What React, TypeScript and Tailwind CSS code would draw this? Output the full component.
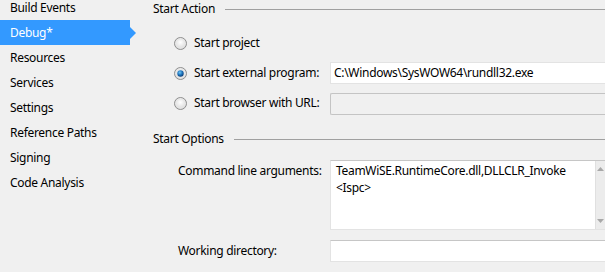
const navItems = [
  "Build Events",
  "Debug*",
  "Resources",
  "Services",
  "Settings",
  "Reference Paths",
  "Signing",
  "Code Analysis",
]

function Radio({ checked }: { checked?: boolean }) {
  return (
    <svg width="13" height="13" viewBox="0 0 13 13" className="shrink-0">
      <defs>
        <radialGradient id="rg" cx="50%" cy="40%" r="60%">
          <stop offset="0%" stopColor="#ffffff" />
          <stop offset="100%" stopColor="#d6d6d6" />
        </radialGradient>
        <radialGradient id="dot" cx="40%" cy="35%" r="65%">
          <stop offset="0%" stopColor="#6fc6f5" />
          <stop offset="60%" stopColor="#1a6fb8" />
          <stop offset="100%" stopColor="#0d3f78" />
        </radialGradient>
      </defs>
      <circle cx="6.5" cy="6.5" r="6" fill="url(#rg)" stroke="#8f8f8f" strokeWidth="1" />
      <circle cx="6.5" cy="6.5" r="4.5" fill="none" stroke="#e8e8e8" strokeWidth="1" />
      {checked && <circle cx="6.5" cy="6.5" r="3.2" fill="url(#dot)" />}
    </svg>
  )
}

function GroupHeader({ title }: { title: string }) {
  return (
    <div className="flex items-center h-[18px]">
      <span className="pr-[10px]">{title}</span>
      <div className="flex-1 h-px bg-[#a0a0a0]" />
    </div>
  )
}

export default function App() {
  return (
    <div
      className="flex h-[272px] w-[605px] overflow-hidden bg-[#f0f0f0] text-[12px] tracking-[-0.3px] text-black"
      style={{ fontFamily: '"Noto Sans", "Open Sans", sans-serif' }}
    >
      {/* ─── Sidebar ─── */}
      <div className="w-[136px] shrink-0 flex flex-col mt-[-5px]">
        {navItems.map((item) => {
          const active = item === "Debug*"
          return (
            <div key={item} className="relative h-[25px] flex items-center">
              <div
                className={
                  active
                    ? "w-[130px] h-full flex items-center pl-[10px] bg-[#3399ff] text-white"
                    : "w-[130px] h-full flex items-center pl-[10px]"
                }
              >
                {item}
              </div>
              {active && (
                <div className="w-0 h-0 border-y-[6px] border-y-transparent border-l-[6px] border-l-[#3399ff]" />
              )}
            </div>
          )
        })}
      </div>

      {/* ─── Main ─── */}
      <div className="flex-1 pl-[17px]">
        <GroupHeader title="Start Action" />

        <div className="pl-[21px] mt-[14px] flex flex-col gap-[8px]">
          <div className="flex items-center h-[22px] gap-[7px]">
            <Radio />
            <span>Start project</span>
          </div>
          <div className="flex items-center h-[22px]">
            <div className="flex items-center gap-[7px] w-[156px]">
              <Radio checked />
              <span>Start external program:</span>
            </div>
            <div className="flex-1 h-[22px] bg-white border border-[#e3e3e3] border-r-0 flex items-center pl-[3px]">
              C:\Windows\SysWOW64\rundll32.exe
            </div>
          </div>
          <div className="flex items-center h-[22px]">
            <div className="flex items-center gap-[7px] w-[156px]">
              <Radio />
              <span>Start browser with URL:</span>
            </div>
            <div className="flex-1 h-[22px] mt-[2px] bg-[#f0f0f0] border border-[#c4c4c4] border-r-0 rounded-l-[2px]" />
          </div>
        </div>

        <div className="mt-[16px]">
          <GroupHeader title="Start Options" />
        </div>

        <div className="pl-[25px] mt-[12px] flex flex-col gap-[10px]">
          <div className="flex items-start">
            <div className="w-[152px] pt-[2px]">Command line arguments:</div>
            <div className="flex-1 h-[70px] flex bg-white border border-[#e3e3e3] border-t-[#c6c6c6] border-r-0">
              <div className="flex-1 pl-[5px] pt-[1px] leading-[17px]">
                <div>TeamWiSE.RuntimeCore.dll,DLLCLR_Invoke</div>
                <div>&lt;Ispc&gt;</div>
              </div>
              <div className="w-[10px] bg-[#ececec] border-l border-[#e0e0e0] flex flex-col justify-between items-center py-[6px]">
                <svg width="7" height="4" viewBox="0 0 7 4">
                  <path d="M0 4 L3.5 0 L7 4 Z" fill="#a8a8a8" />
                </svg>
                <svg width="7" height="4" viewBox="0 0 7 4">
                  <path d="M0 0 L3.5 4 L7 0 Z" fill="#a8a8a8" />
                </svg>
              </div>
            </div>
          </div>
          <div className="flex items-center">
            <div className="w-[152px]">Working directory:</div>
            <div className="flex-1 h-[22px] bg-white border border-[#e3e3e3] border-t-[#c6c6c6] border-r-0" />
          </div>
        </div>
      </div>
    </div>
  )
}
